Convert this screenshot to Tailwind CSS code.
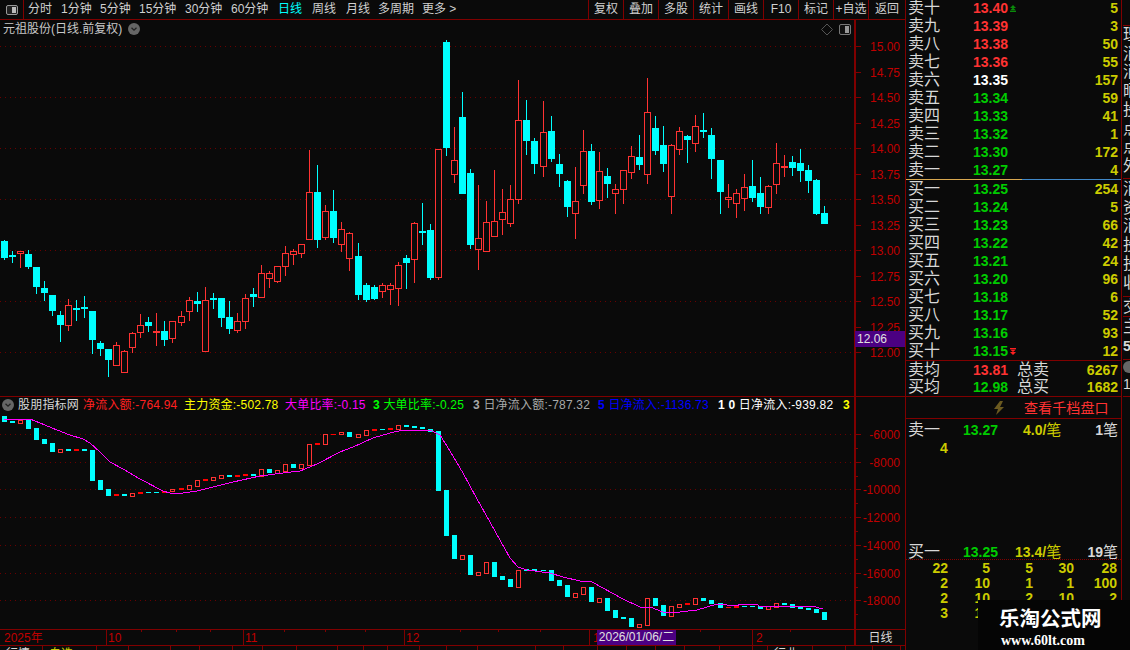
<!DOCTYPE html>
<html lang="zh-CN">
<head>
  <meta charset="UTF-8">
  <title>元祖股份 日线</title>
  <script src="https://cdn.jsdelivr.net/npm/@tailwindcss/browser@4"></script>
</head>
<body class="bg-[#0a0a0a]">
<div class="w-[1130px] h-[650px] flex overflow-hidden bg-[#0a0a0a] text-[#d0d0d0] text-[12px] font-['Liberation_Sans','Noto_Sans_CJK_SC',sans-serif]">

  <!-- left: chart column -->
  <div class="w-[906px] shrink-0 h-full flex flex-col border-r border-[#800000]">
    <!-- top bar -->
    <div class="h-[20px] shrink-0 flex items-center border-b border-[#800000] whitespace-nowrap leading-[19px]">
      <div class="w-[24px] h-full shrink-0 flex items-center justify-center border-r border-[#800000]">
        <svg width="14" height="12" viewBox="0 0 14 12"><rect x="1.5" y="1.5" width="11" height="9" rx="1.5" fill="#222" stroke="#999"/><rect x="7" y="3" width="4" height="6" fill="#bbb"/></svg>
      </div>
      <span class="ml-[4px] w-[33px]">分时</span>
      <span class="w-[39px]">1分钟</span>
      <span class="w-[39px]">5分钟</span>
      <span class="w-[46px]">15分钟</span>
      <span class="w-[46px]">30分钟</span>
      <span class="w-[47px]">60分钟</span>
      <span class="w-[34px] text-[#00ffff]">日线</span>
      <span class="w-[34px]">周线</span>
      <span class="w-[32px]">月线</span>
      <span class="w-[44px]">多周期</span>
      <span class="w-[36px]">更多 &gt;</span>
      <div class="ml-auto flex h-full">
        <span class="w-[35px] text-center border-l border-[#800000]">复权</span>
        <span class="w-[35px] text-center border-l border-[#800000]">叠加</span>
        <span class="w-[35px] text-center border-l border-[#800000]">多股</span>
        <span class="w-[35px] text-center border-l border-[#800000]">统计</span>
        <span class="w-[35px] text-center border-l border-[#800000]">画线</span>
        <span class="w-[35px] text-center border-l border-[#800000]">F10</span>
        <span class="w-[35px] text-center border-l border-[#800000]">标记</span>
        <span class="w-[35px] text-center border-l border-[#800000]">+自选</span>
        <span class="w-[37px] text-center border-l border-[#800000]">返回</span>
      </div>
    </div>

    <!-- price pane -->
    <div class="relative h-[377px] shrink-0 border-b border-[#800000]">
      <svg id="priceChart" class="absolute inset-0" width="905" height="376" viewBox="0 20 905 376" shape-rendering="crispEdges"></svg>
      <div class="absolute left-[3px] top-[2px] flex items-center gap-[6px] text-[#c8c8c8] whitespace-nowrap leading-[14px]">
        <span>元祖股份(日线.前复权)</span>
        <svg width="12" height="12" viewBox="0 0 12 12"><circle cx="6" cy="6" r="6" fill="#666"/><path d="M3.5 4.8 6 7.2 8.500 4.8" fill="none" stroke="#222" stroke-width="1.300"/></svg>
      </div>
      <svg class="absolute left-[820px] top-[3px]" width="34" height="13" viewBox="0 0 34 13"><path d="M7 1 12.500 6.500 7 12 1.500 6.500Z" fill="none" stroke="#555"/><rect x="19.500" y="1.500" width="11" height="10" rx="1.500" fill="#111" stroke="#777"/><rect x="25" y="3" width="4" height="7" fill="#999"/></svg>
      <div class="absolute left-[855px] top-[311px] w-[50px] h-[16px] bg-[#4b0082] text-[#e0e0e0] leading-[16px] pl-[2px]">12.06</div>
    </div>

    <!-- indicator pane -->
    <div class="relative h-[233px] shrink-0 border-b border-[#800000]">
      <svg id="flowChart" class="absolute inset-0" width="905" height="233" viewBox="0 397 905 233" shape-rendering="crispEdges"></svg>
      <div class="absolute left-[2px] top-[1px] flex items-center whitespace-nowrap leading-[14px] tracking-[0.2px]">
        <svg class="mr-[4px] shrink-0" width="12" height="12" viewBox="0 0 12 12"><circle cx="6" cy="6" r="6" fill="#666"/><path d="M3.5 4.8 6 7.2 8.500 4.8" fill="none" stroke="#222" stroke-width="1.300"/></svg>
        <span class="w-[65px] text-[#d8d8d8]">股朋指标网</span>
        <span class="w-[101px] text-[#ff2020]">净流入额:-764.94</span>
        <span class="w-[101px] text-[#ffff00]">主力资金:-502.78</span>
        <span class="w-[88px] text-[#ff00ff]">大单比率:-0.15</span>
        <span class="w-[100px] text-[#00ff00]"><b>3</b> 大单比率:-0.25</span>
        <span class="w-[125px] text-[#a8a8a8]"><b>3</b> 日净流入额:-787.32</span>
        <span class="w-[120px] text-[#0000ff]"><b>5</b> 日净流入:-1136.73</span>
        <span class="w-[125px] text-white"><b>1 0</b> 日净流入:-939.82</span>
        <b class="text-[#ffff00]">3</b>
      </div>
    </div>

    <!-- time axis -->
    <div class="relative h-[16px] shrink-0 border-b border-[#800000] flex text-[#c00000] leading-[16px] whitespace-nowrap">
      <svg id="timeTicks" class="absolute inset-0" width="905" height="16" shape-rendering="crispEdges"></svg>
      <span class="w-[107px] pl-[4px] border-r border-[#800000]">2025年</span>
      <span class="w-[137px] pl-[1px] border-r border-[#800000]">10</span>
      <span class="w-[161px] pl-[1px] border-r border-[#800000]">11</span>
      <span class="w-[185px] pl-[1px] border-r border-[#800000]">12</span>
      <span class="w-[162px] pl-[3px]">1</span>
      <span class="w-[102px] pl-[3px] border-l border-[#800000]">2</span>
      <span class="flex-1 text-center text-[#d8d8d8] border-l-2 border-[#800000]">日线</span>
      <div class="absolute left-[597px] top-0 w-[79px] h-[15px] bg-[#4b0082] text-[#e0e0e0] text-center leading-[15px]">2026/01/06/二</div>
    </div>

    <!-- clipped tab strip -->
    <div id="tabs" class="flex-1 flex overflow-hidden leading-[12px]"></div>
  </div>

  <!-- right: order book -->
  <div class="w-[215px] shrink-0 h-full flex flex-col">
    <div id="asks" class="-mt-[1px] shrink-0"></div>
    <div class="h-px shrink-0 flex"><div class="w-[116px] bg-[#d8a850]"></div><div class="flex-1 bg-[#4088c8]"></div></div>
    <div id="bids" class="shrink-0 border-b border-[#800000]"></div>

    <div class="h-[36px] shrink-0 grid grid-cols-[65px_44px_1fr_auto] grid-rows-2 pl-[2px] pr-[3px] items-center leading-[18px] border-b border-[#800000]">
      <span class="text-[16px] text-[#d8d8d8]">卖均</span><b class="text-[14px] text-[#ff3232]">13.81</b><span class="text-[16px] text-[#d8d8d8]">总卖</span><b class="text-[14px] text-[#cccc00]">6267</b>
      <span class="text-[16px] text-[#d8d8d8]">买均</span><b class="text-[14px] text-[#00cc00]">12.98</b><span class="text-[16px] text-[#d8d8d8]">总买</span><b class="text-[14px] text-[#cccc00]">1682</b>
    </div>

    <div class="h-[22px] shrink-0 flex items-center border-b border-[#800000]">
      <svg class="ml-[87px]" width="12" height="14" viewBox="0 0 12 14"><path d="M7 0 1 8h4l-2 6 8-8H7l3-6Z" fill="#6b5a20"/></svg>
      <span class="ml-[19px] text-[14px] text-[#ff3232] leading-[20px] tracking-[0.1px]">查看千档盘口</span>
    </div>

    <div class="h-[20px] shrink-0 grid grid-cols-[55px_60px_1fr_auto] pl-[2px] pr-[3px] items-center">
      <span class="text-[16px] text-[#d8d8d8] leading-[20px]">卖一</span><b class="text-[14px] text-[#00cc00]">13.27</b><span class="text-[#cccc00] text-[15px]"><b class="text-[14px]">4.0/</b>笔</span><span class="text-[15px] text-[#d8d8d8]"><b class="text-[14px]">1</b>笔</span>
    </div>
    <div class="h-[18px] shrink-0 pl-[34px] text-[14px] font-bold text-[#cccc00] leading-[18px]">4</div>
    <div class="flex-1"></div>

    <div class="h-[109px] shrink-0">
      <div class="h-[19px] grid grid-cols-[55px_52px_1fr_auto] pl-[2px] pr-[3px] items-center border-b border-dotted border-[#800000]">
        <span class="text-[16px] text-[#d8d8d8] leading-[18px]">买一</span><b class="text-[14px] text-[#00cc00]">13.25</b><span class="text-[#cccc00] text-[15px]"><b class="text-[14px]">13.4/</b>笔</span><span class="text-[15px] text-[#d8d8d8]"><b class="text-[14px]">19</b>笔</span>
      </div>
      <div class="mt-[1px] grid grid-cols-[42px_42px_43px_41px_43px] text-right text-[14px] font-bold text-[#cccc00] leading-[15px]">
        <span>22</span><span>5</span><span>5</span><span>30</span><span>28</span>
        <span>2</span><span>10</span><span>1</span><span>1</span><span>100</span>
        <span>2</span><span>10</span><span>2</span><span>10</span><span>2</span>
        <span>3</span><span>10</span>
      </div>
    </div>
  </div>

  <!-- right: clipped news strip -->
  <div class="flex-1 h-full border-l border-[#800000] overflow-hidden pl-[1px] text-[16px] leading-[18.7px] text-[#d8d8d8] whitespace-nowrap">
    <div class="h-[26px] border-b border-[#800000]"></div>
    <div class="h-[153px] border-b border-[#800000]"><p>理</p><p>消</p><p>消</p><p>晒</p><p>投</p><p>点</p><p>点</p><p>外</p></div>
    <div class="h-[118px] pt-[1px] border-b border-[#800000]"><p>消</p><p>资</p><p>消</p><p>投</p><p>投</p><p>收</p></div>
    <div class="h-[20px] leading-[19px] border-b border-[#800000]"><p>交</p></div>
    <div class="h-[43px] border-b border-[#800000] pt-[1px]"><p>主</p><b class="text-[14px]">5</b></div>
    <div class="h-[37px] border-b border-[#800000] pt-[1px]">
      <svg class="block" width="12" height="12" viewBox="0 0 12 12"><circle cx="6" cy="6" r="6" fill="#666"/></svg>
      <span class="text-[14px] leading-[22px]">1</span>
    </div>
  </div>

  <!-- watermark -->
  <div class="absolute left-[978px] top-[600px] w-[152px] h-[50px] bg-[#050505] text-white flex flex-col items-start pl-[21px] font-['Liberation_Serif','Noto_Sans_CJK_SC',serif] font-bold">
    <span class="mt-[7px] text-[20.5px] leading-[24px]">乐淘公式网</span>
    <span class="mt-[2px] ml-[2px] text-[14px] leading-[16px]">www.60lt.com</span>
  </div>
</div>

<script>
  const NS = 'http://www.w3.org/2000/svg';
  const CYAN = '#00ffff', RED = '#ff3232', BG = '#0a0a0a';

  // candle column x; the terminal's spacing is 8px with an extra pixel now and then
  function cx(i) {
    if (i >= 89) return 8 + 8 * i;
    if (i >= 67) return 7 + 8 * i;
    if (i >= 44) return 6 + 8 * i;
    if (i >= 22) return 5 + 8 * i;
    return 4 + 8 * i;
  }

  function add(svg, tag, attrs, text) {
    const el = document.createElementNS(NS, tag);
    for (const k in attrs) el.setAttribute(k, attrs[k]);
    if (text) el.textContent = text;
    svg.appendChild(el);
    return el;
  }

  function grid(svg, ys) {
    ys.forEach(y => add(svg, 'line', { x1: 0, x2: 852, y1: y + .5, y2: y + .5, stroke: '#6a0000', 'stroke-dasharray': '1 4' }));
  }

  function axis(svg, top, bottom, labels, minors) {
    add(svg, 'rect', { x: 854, y: top, width: 2, height: bottom - top, fill: '#800000' });
    labels.forEach(([y, s]) => {
      add(svg, 'rect', { x: 855, y: y, width: 6, height: 1, fill: '#800000' });
      add(svg, 'text', { x: 900, y: y + 4.5, 'text-anchor': 'end', 'font-size': 12, fill: '#c00000', 'shape-rendering': 'auto' }, s);
    });
    minors.forEach(y => add(svg, 'rect', { x: 855, y: y, width: 3, height: 1, fill: '#800000' }));
  }

  // [type, wickTop, bodyTop, bodyBottom, wickBottom]; c cyan, r red hollow, s red solid
  const price = [
    ['c',240,241,258,260],['c',251,255,257,263],['r',251,251,254,268],['c',250,254,267,269],['c',267,267,287,294],
    ['c',281,288,293,301],['c',295,295,311,316],['c',311,315,325,342],['r',299,305,326,331],['c',300,308,310,321],
    ['c',296,307,309,318],['c',311,311,340,354],['c',341,343,349,356],['c',349,349,360,377],['r',342,345,366,366],
    ['r',350,351,373,373],['r',332,333,348,353],['r',314,325,333,338],['c',317,322,326,332],['s',313,331,333,346],
    ['c',321,331,340,346],['r',321,321,339,343],['r',311,316,323,326],['r',297,300,312,321],['c',292,301,304,312],
    ['r',287,300,352,352],['c',293,298,300,309],['c',298,298,318,327],['c',301,317,329,334],['r',313,321,331,333],
    ['r',294,298,322,329],['c',288,294,297,307],['r',265,273,298,298],['r',271,273,279,288],['r',266,266,282,283],
    ['r',246,253,267,276],['r',249,251,255,265],['r',244,244,254,258],['r',150,192,240,240],['c',165,192,240,248],
    ['r',205,211,238,240],['c',190,211,238,243],['r',222,229,245,252],['r',232,233,259,271],['c',243,256,295,300],
    ['c',283,285,300,302],['c',285,287,299,300],['r',283,285,292,298],['r',283,285,290,305],['r',262,265,289,306],
    ['c',255,258,263,289],['r',222,223,260,283],['c',203,231,233,245],['c',224,230,278,280],['r',149,149,278,280],
    ['c',40,42,148,156],['r',127,160,175,183],['c',92,117,194,194],['c',169,173,245,249],['r',185,238,250,270],
    ['r',201,222,252,252],['r',170,221,237,237],['r',189,212,220,235],['r',185,199,224,227],['r',80,120,200,204],
    ['c',100,120,141,155],['c',138,141,164,174],['r',101,132,167,177],['c',116,131,159,162],['c',154,164,174,187],
    ['c',180,181,207,217],['r',167,201,214,239],['r',130,151,186,194],['c',144,151,202,205],['r',152,171,201,209],
    ['c',168,176,184,198],['r',184,189,194,214],['r',170,170,190,204],['r',146,156,173,179],['c',135,157,165,170],
    ['r',78,112,175,184],['c',116,128,151,155],['c',126,145,164,172],['r',144,145,197,214],['r',127,131,150,155],
    ['c',135,136,140,163],['r',115,126,144,152],['c',113,130,132,138],['c',128,135,159,179],['c',160,160,192,214],
    ['r',184,197,200,208],['r',189,193,204,218],['r',174,187,199,211],['c',160,186,198,202],['c',177,193,207,214],
    ['r',185,186,208,214],['r',143,163,185,194],['s',155,166,168,177],['c',156,162,168,176],['c',149,163,171,182],
    ['c',165,170,181,193],['c',179,180,214,215],['c',206,213,224,224]
  ];

  // [type, bodyTop, bodyBottom]
  const flow = [
    ['c',416,422],['c',421,423],['r',420,423],['c',420,429],['c',428,440],['c',439,444],['c',443,452],['r',449,452],
    ['c',449,451],['s',449,451],['c',449,451],['c',450,481],['c',480,490],['c',489,496],['s',494,496],['c',494,496],
    ['r',493,496],['s',492,494],['c',492,493],['c',492,493],['s',491,493],['r',489,491],['s',488,490],['r',485,489],
    ['r',480,486],['s',479,481],['r',477,480],['r',475,478],['c',475,477],['s',475,477],['s',474,476],['c',474,476],
    ['r',469,476],['c',469,473],['r',470,473],['r',464,471],['c',464,468],['r',464,468],['r',444,465],['s',443,445],
    ['r',434,444],['s',434,435],['r',432,434],['c',432,437],['r',434,437],['r',430,435],['s',429,431],['c',429,430],
    ['s',428,430],['r',425,429],['c',425,427],['c',426,428],['c',427,429],['c',429,432],['c',431,491],['c',490,536],
    ['c',535,559],['r',555,559],['c',555,575],['r',572,575],['r',562,573],['c',562,577],['c',576,580],['c',579,587],
    ['r',570,587],['c',569,571],['c',569,571],['c',570,571],['c',570,581],['c',580,586],['c',585,597],['r',593,597],
    ['r',587,594],['c',587,602],['r',598,602],['c',598,611],['c',610,618],['c',617,619],['c',618,627],['r',624,627],
    ['r',598,625],['c',598,606],['c',605,616],['r',606,616],['r',604,607],['s',603,605],['r',598,604],['c',598,601],
    ['c',600,604],['c',603,608],['s',607,608],['s',606,608],['c',606,607],['c',606,607],['c',606,609],['r',606,609],
    ['r',603,607],['c',603,605],['c',604,608],['c',607,609],['c',608,610],['c',609,613],['c',612,620]
  ];

  const maLine = [[4,419],[30,419],[40,423],[57,430],[70,435],[83,439],[90,443],[100,452],[110,462],[123,469],[140,479],
    [163,491],[170,493],[183,493],[197,491],[213,487],[233,482],[260,476],[283,473],[300,471],[317,464],[340,452],
    [353,447],[373,438],[390,433],[403,430],[417,430],[430,430],[440,435],[450,451],[463,473],[477,499],[490,522],
    [500,540],[510,558],[518,567],[527,570],[550,573],[563,577],[580,581],[592,582],[603,588],[623,599],[640,607],
    [650,607],[663,612],[680,612],[697,610],[707,607],[717,604],[737,606],[740,604],[757,604],[759,606],[812,606],[823,609]];

  const priceSvg = document.getElementById('priceChart');
  grid(priceSvg, [46, 97, 148, 199, 250, 301, 352]);
  axis(priceSvg, 20, 397,
    [[46,'15.00'],[72,'14.75'],[97,'14.50'],[123,'14.25'],[148,'14.00'],[174,'13.75'],[199,'13.50'],[225,'13.25'],[250,'13.00'],[276,'12.75'],[301,'12.50'],[327,'12.25'],[352,'12.00']],
    []);
  price.forEach((d, i) => {
    const [t, wt, bt, bb, wb] = d, c = cx(i), col = t === 'c' ? CYAN : RED;
    add(priceSvg, 'rect', { x: c, y: wt, width: 1, height: wb - wt, fill: col });
    if (t === 'r') add(priceSvg, 'rect', { x: c - 2.5, y: bt + .5, width: 6, height: bb - bt - 1, fill: BG, stroke: col });
    else add(priceSvg, 'rect', { x: c - 3, y: bt, width: 7, height: bb - bt, fill: col });
  });

  const flowSvg = document.getElementById('flowChart');
  grid(flowSvg, [434, 462, 489, 517, 545, 573, 600]);
  axis(flowSvg, 397, 630,
    [[434,'-6000'],[462,'-8000'],[489,'-10000'],[517,'-12000'],[545,'-14000'],[573,'-16000'],[600,'-18000']],
    [448, 476, 503, 531, 559, 587, 614]);
  flow.forEach((d, i) => {
    const [t, bt, bb] = d, c = cx(i);
    if (t === 'r') add(flowSvg, 'rect', { x: c - 1.5, y: bt + .5, width: 4, height: bb - bt, fill: BG, stroke: RED });
    else add(flowSvg, 'rect', { x: c - 2, y: bt, width: 5, height: bb - bt, fill: t === 'c' ? CYAN : '#ff0000' });
  });
  add(flowSvg, 'polyline', { points: maLine.join(' '), fill: 'none', stroke: '#ff00ff', 'stroke-width': 1 });

  const ticks = document.getElementById('timeTicks');
  [141, 176, 210, 284, 325, 365, 460, 498, 540, 640, 700, 790].forEach(x =>
    add(ticks, 'rect', { x: x, y: 0, width: 1, height: 2, fill: '#800000' }));

  // order book rows
  const asks = [['卖十','13.40','#ff3232','5','up'],['卖九','13.39','#ff3232','3'],['卖八','13.38','#ff3232','50'],['卖七','13.36','#ff3232','55'],['卖六','13.35','#ffffff','157'],
    ['卖五','13.34','#00cc00','59'],['卖四','13.33','#00cc00','41'],['卖三','13.32','#00cc00','1'],['卖二','13.30','#00cc00','172'],['卖一','13.27','#00cc00','4']];
  const bids = [['买一','13.25','#00cc00','254'],['买二','13.24','#00cc00','5'],['买三','13.23','#00cc00','66'],['买四','13.22','#00cc00','42'],['买五','13.21','#00cc00','24'],
    ['买六','13.20','#00cc00','96'],['买七','13.18','#00cc00','6'],['买八','13.17','#00cc00','52'],['买九','13.16','#00cc00','93'],['买十','13.15','#00cc00','12','down']];
  const arrows = {
    up: '<svg class="ml-[2px]" width="6" height="7" viewBox="0 0 6 7"><path d="M3 0 6 3H0ZM3 2.500 6 5.500H0ZM0 6h6v1H0Z" fill="#0a8a0a"/></svg>',
    down: '<svg class="ml-[2px]" width="6" height="7" viewBox="0 0 6 7"><path d="M0 0h6v1H0ZM3 4 0 1.500h6ZM3 7 0 4h6Z" fill="#ff2020"/></svg>'
  };
  const renderRows = (id, rows) => {
    document.getElementById(id).innerHTML = rows.map(([label, p, col, vol, arrow]) =>
      `<div class="h-[18px] flex items-center pl-[2px] pr-[3px] leading-[18px]">
        <span class="w-[65px] text-[16px] text-[#d8d8d8]">${label}</span>
        <b class="text-[14px]" style="color:${col}">${p}</b>${arrow ? arrows[arrow] : ''}
        <b class="ml-auto text-[14px] text-[#cccc00]">${vol}</b>
      </div>`).join('');
  };
  renderRows('asks', asks);
  renderRows('bids', bids);

  // tab strip under the time axis, only its top few pixels are on screen
  const tabs = [[43,'行情','text-[#d8d8d8]'],[54,'自选','text-[#cccc00]'],[32,'','' ],[42,'','' ],[29,'','' ],[33,'','' ],[30,'','' ],[34,'','' ],[41,'','' ],[26,'','' ],[24,'','' ],[32,'','' ],[27,'','' ],
    [31,'','' ],[58,'','' ],[28,'','' ],[34,'','' ],[29,'','' ],[29,'','' ],[29,'','' ],[35,'','' ],[33,'','' ],[15,'','' ],[45,'行业','text-[#d8d8d8]'],[33,'','' ],[27,'','' ],[28,'','' ]];
  document.getElementById('tabs').innerHTML = tabs.map(([w, s, c]) =>
    `<div class="h-full shrink-0 pl-[6px] pt-[2px] border-r border-[#800000] ${c}" style="width:${w}px">${s}</div>`).join('');
</script>
</body>
</html>
